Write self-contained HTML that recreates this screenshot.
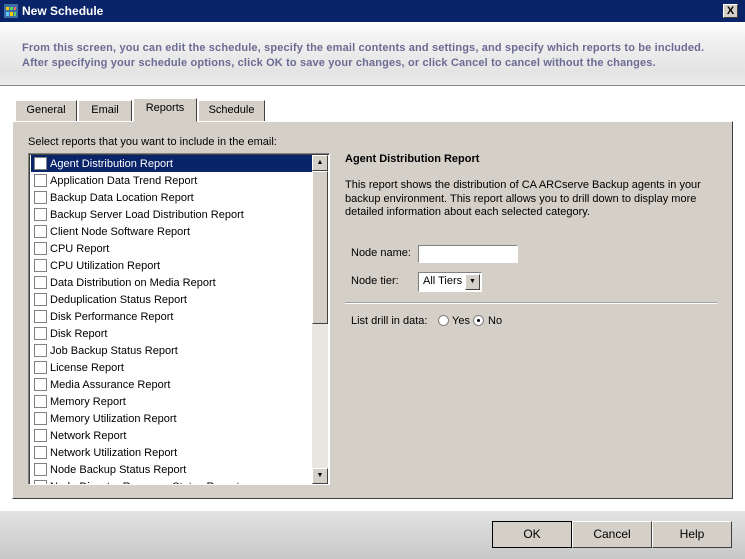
<!DOCTYPE html>
<html><head><style>
*{margin:0;padding:0;box-sizing:border-box}
body{width:745px;height:559px;overflow:hidden;font-family:"Liberation Sans",sans-serif;font-size:11px;color:#000;background:#fff;position:relative}
.abs{position:absolute}
#title{left:0;top:0;width:745px;height:22px;background:#0a246a;color:#fff;font-weight:bold;font-size:12px;line-height:22px;padding-left:22px}
#hdr{left:0;top:22px;width:745px;height:64px;background:linear-gradient(#fff,#f0f0f0 30%,#e4e4e4 80%,#ececec);border-bottom:1px solid #888}
#hdr p{position:absolute;left:22px;top:19px;color:#6b6b94;font-weight:bold;font-size:11px;line-height:15px;letter-spacing:0.15px}
.tab{top:100px;height:21px;background:#d4d0c8;border:1px solid #fff;border-right:1px solid #404040;border-bottom:none;line-height:19px;text-align:center}
#panel{left:12px;top:121px;width:721px;height:378px;background:#d4d0c8;border:1px solid #fff;border-right-color:#404040;border-bottom-color:#404040}
#list{left:28px;top:153px;width:302px;height:332px;background:#fff;border:1px solid #808080;border-right-color:#fff;border-bottom-color:#fff;box-shadow:inset 1px 1px 0 #404040;overflow:hidden}
.row{position:absolute;left:2px;height:17px;width:282px;line-height:18px;padding-left:19px;white-space:nowrap}
.row i{position:absolute;left:3px;top:2px;width:13px;height:13px;border:1px solid #808080;background:#fff}
.sel{background:#0a246a;color:#fff}
.sb{position:absolute;right:1px;top:1px;width:16px;height:329px;background:#e8e6e0}
.btn{position:absolute;background:#d4d0c8;border:1px solid #fff;border-right-color:#404040;border-bottom-color:#404040;text-align:center}
#foot{left:0;top:510px;width:745px;height:49px;background:linear-gradient(#e2e2e2,#c8c8c8);border-top:1px solid #fff}
.fb{top:521px;height:27px;width:80px;line-height:25px;font-size:12px}
</style></head><body>
<div class="abs" id="title">New Schedule
<svg class="abs" style="left:4px;top:4px" width="14" height="14"><rect width="14" height="14" fill="#3a6ea5"/><rect x="2" y="3" width="3" height="3" fill="#fc0"/><rect x="6" y="3" width="3" height="3" fill="#6c6"/><rect x="10" y="3" width="2" height="3" fill="#f66"/><rect x="2" y="8" width="3" height="4" fill="#6cf"/><rect x="6" y="8" width="3" height="4" fill="#fc0"/><rect x="10" y="8" width="2" height="4" fill="#6c6"/></svg>
<div class="abs" style="left:723px;top:4px;width:15px;height:14px;background:#d4d0c8;border:1px solid #fff;border-right-color:#404040;border-bottom-color:#404040;color:#000;font-size:11px;line-height:12px;text-align:center">X</div></div>
<div class="abs" id="hdr"><p>From this screen, you can edit the schedule, specify the email contents and settings, and specify which reports to be included.<br>After specifying your schedule options, click OK to save your changes, or click Cancel to cancel without the changes.</p></div>
<div class="abs" id="panel"></div>
<div class="abs tab" style="left:15px;width:62px">General</div>
<div class="abs tab" style="left:78px;width:54px">Email</div>
<div class="abs tab" style="left:133px;width:64px;top:98px;height:24px;border-bottom:1px solid #d4d0c8">Reports</div>
<div class="abs tab" style="left:198px;width:67px">Schedule</div>
<div class="abs" style="left:28px;top:136px">Select reports that you want to include in the email:</div>
<div class="abs" id="list">
<div class="row sel" style="top:1px"><i></i>Agent Distribution Report</div>
<div class="row" style="top:18px"><i></i>Application Data Trend Report</div>
<div class="row" style="top:35px"><i></i>Backup Data Location Report</div>
<div class="row" style="top:52px"><i></i>Backup Server Load Distribution Report</div>
<div class="row" style="top:69px"><i></i>Client Node Software Report</div>
<div class="row" style="top:86px"><i></i>CPU Report</div>
<div class="row" style="top:103px"><i></i>CPU Utilization Report</div>
<div class="row" style="top:120px"><i></i>Data Distribution on Media Report</div>
<div class="row" style="top:137px"><i></i>Deduplication Status Report</div>
<div class="row" style="top:154px"><i></i>Disk Performance Report</div>
<div class="row" style="top:171px"><i></i>Disk Report</div>
<div class="row" style="top:188px"><i></i>Job Backup Status Report</div>
<div class="row" style="top:205px"><i></i>License Report</div>
<div class="row" style="top:222px"><i></i>Media Assurance Report</div>
<div class="row" style="top:239px"><i></i>Memory Report</div>
<div class="row" style="top:256px"><i></i>Memory Utilization Report</div>
<div class="row" style="top:273px"><i></i>Network Report</div>
<div class="row" style="top:290px"><i></i>Network Utilization Report</div>
<div class="row" style="top:307px"><i></i>Node Backup Status Report</div>
<div class="row" style="top:324px"><i></i>Node Disaster Recovery Status Report</div>
<div class="sb">
<div class="btn" style="left:0;top:0;width:16px;height:16px;font-size:7px;line-height:14px">▲</div>
<div class="btn" style="left:0;top:16px;width:16px;height:153px"></div>
<div class="btn" style="left:0;top:313px;width:16px;height:16px;font-size:7px;line-height:14px">▼</div>
</div></div>
<div class="abs" style="left:345px;top:153px;font-weight:bold">Agent Distribution Report</div>
<div class="abs" style="left:345px;top:179px;line-height:13.5px">This report shows the distribution of CA ARCserve Backup agents in your<br>backup environment. This report allows you to drill down to display more<br>detailed information about each selected category.</div>
<div class="abs" style="left:351px;top:247px">Node name:</div>
<div class="abs" style="left:418px;top:245px;width:100px;height:18px;background:#fff;border:1px solid #808080;border-right-color:#fff;border-bottom-color:#fff"></div>
<div class="abs" style="left:351px;top:275px">Node tier:</div>
<div class="abs" style="left:418px;top:272px;width:64px;height:20px;background:#fff;border:1px solid #808080;border-right-color:#fff;border-bottom-color:#fff;padding:2px 0 0 4px">All Tiers
<div class="btn" style="right:1px;top:1px;width:15px;height:16px;font-size:7px;line-height:14px">▼</div></div>
<div class="abs" style="left:345px;top:302px;width:372px;height:2px;border-top:1px solid #a0a0a0;border-bottom:1px solid #fff"></div>
<div class="abs" style="left:351px;top:315px">List drill in data:</div>
<div class="abs" style="left:438px;top:315px;width:11px;height:11px;border-radius:50%;background:#fff;border:1px solid #808080"></div>
<div class="abs" style="left:452px;top:315px">Yes</div>
<div class="abs" style="left:473px;top:315px;width:11px;height:11px;border-radius:50%;background:#fff;border:1px solid #808080"><div class="abs" style="left:3px;top:3px;width:3px;height:3px;background:#000;border-radius:50%"></div></div>
<div class="abs" style="left:488px;top:315px">No</div>
<div class="abs" id="foot"></div>
<div class="btn fb" style="left:492px;border:1px solid #000">OK</div>
<div class="btn fb" style="left:572px">Cancel</div>
<div class="btn fb" style="left:652px">Help</div>
</body></html>
